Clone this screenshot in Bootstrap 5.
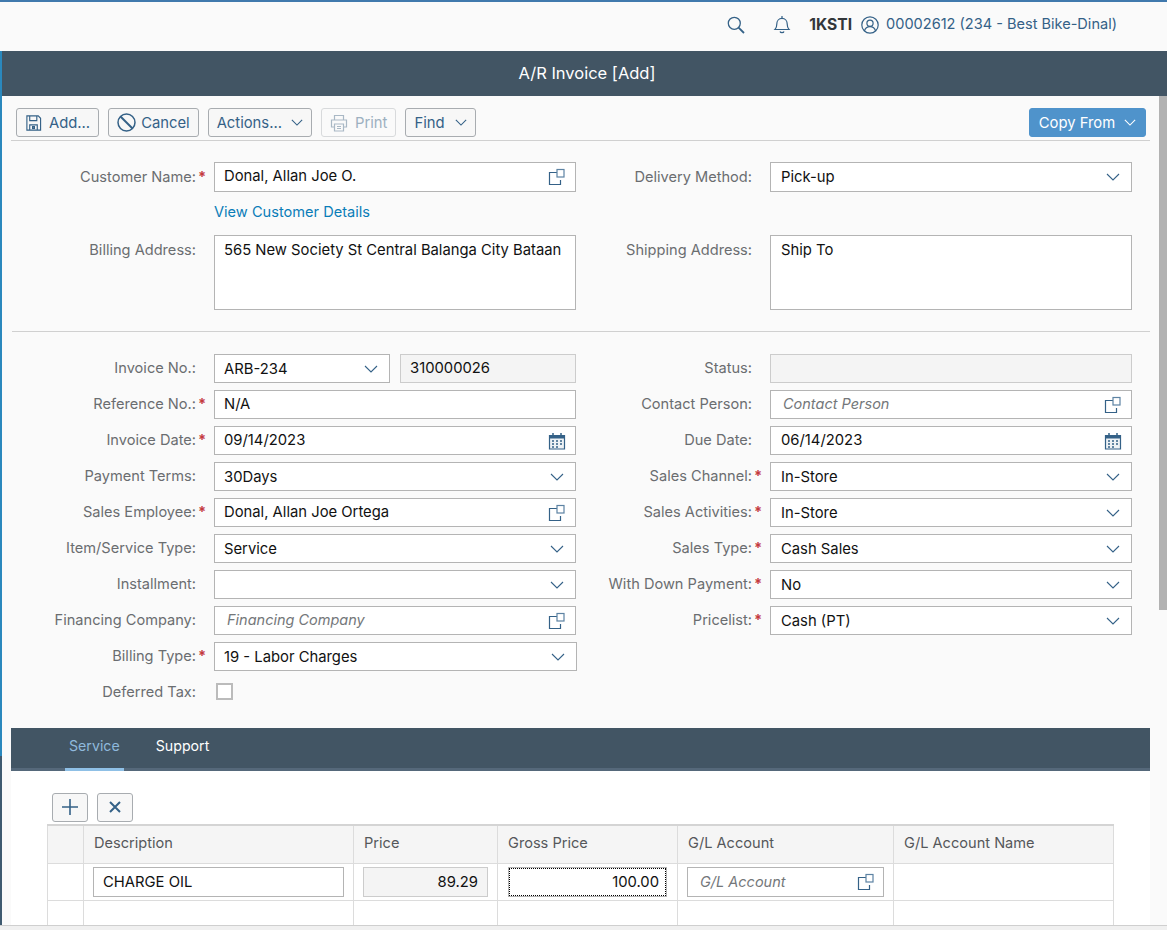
<!DOCTYPE html>
<html lang="en">
<head>
<meta charset="utf-8">
<title>A/R Invoice [Add]</title>
<link href="https://cdn.jsdelivr.net/npm/bootstrap@5.3.0/dist/css/bootstrap.min.css" rel="stylesheet">
<style>
:root{--ink:#346187;--fld:#b4b4b4;}
html,body{height:930px;overflow:hidden;}
body{font-family:"Inter","Noto Sans",sans-serif;font-size:14.6px;background:#fafafa;color:#111;}
.page-wrap{height:930px;display:flex;flex-direction:column;position:relative;}
.top-strip{height:51px;border-top:2px solid #4079ad;background:#fafafa;color:var(--ink);flex:none;padding:0 50px 4px 0;font-size:14.55px;}
.top-strip .co{font-weight:700;color:#32363a;font-size:15.600px;}
.shell{flex:1;min-height:0;overflow:hidden;padding-left:2px;background:linear-gradient(#2a88bd 0,#2a88bd 705px,#3f5a70 705px);}
.shell-in{height:100%;background:#fafafa;}
.title-bar{height:45px;background:#425564;color:#fff;font-size:16.5px;padding:0 0 1px 5px;}
.tool-row{margin:0 17px 0 9px;padding:12px 0 3px 5px;border-bottom:1px solid #d0d0d0;height:45px;}
.tbtn.btn{--bs-btn-padding-y:0;--bs-btn-padding-x:8px;--bs-btn-font-size:14.8px;--bs-btn-color:var(--ink);--bs-btn-bg:#f7f7f7;--bs-btn-border-color:#a8acb0;--bs-btn-border-radius:3px;--bs-btn-hover-color:var(--ink);--bs-btn-hover-bg:#eee;--bs-btn-hover-border-color:#a8acb0;height:29px;line-height:27px;padding-top:1px;display:inline-flex;align-items:center;gap:5px;white-space:nowrap;}
.tbtn.btn svg{margin-top:-1px;}
.tbtn.dim{color:#9db0c0;border-color:#d8dadc;}
.tbtn.prime.btn{--bs-btn-color:#fff;--bs-btn-bg:#4f93cb;--bs-btn-border-color:#4f93cb;--bs-btn-hover-color:#fff;--bs-btn-hover-bg:#4f93cb;--bs-btn-hover-border-color:#4f93cb;min-width:117px;justify-content:center;}
.icon-btn.btn{width:36px;justify-content:center;padding:0;}
.form-zone{padding:21px 0 14px 10px;}
.fld-row{display:flex;height:29px;margin-bottom:7px;}
.fld-row.tall{height:75px;margin-bottom:21px;align-items:flex-start;}
.fld-row.first{height:30px;margin-bottom:0;}
.fld-row.first .lbl-l,.fld-row.first .lbl-r,.fld-row.first .star,.fld-row.tall .lbl-l,.fld-row.tall .lbl-r{line-height:30px;}
.fld-row.lnk{height:43px;margin:0;align-items:center;}
.lbl-l,.lbl-r{color:#6a6d70;text-align:right;line-height:28px;white-space:nowrap;flex:none;}
.lbl-l{width:184px;margin-right:2px;}
.lbl-r{width:176px;}
.star{flex:none;color:#c4393f;line-height:28px;font-weight:700;}
.star-l{width:16px;}
.star-r{width:18px;padding-left:2px;}
.fld{width:362px;flex:none;position:relative;}
.fld .form-control,.fld .form-select{height:100%;border:1px solid var(--fld);border-radius:0;font-size:14.8px;padding:0 9px 2px;color:#111;box-shadow:none;}
.fld .form-select{padding:1px 9px 0;}
.lbl-r ~ .fld .form-control,.lbl-r ~ .fld .form-select{padding-left:10px;}
.fld textarea.form-control{height:75px;padding:3px 9px;resize:none;}
.form-select{background-image:url("data:image/svg+xml,%3Csvg xmlns='http://www.w3.org/2000/svg' viewBox='0 0 14 8'%3E%3Cpath d='M1 1l6 6 6-6' fill='none' stroke='%23346187' stroke-width='1.1'/%3E%3C/svg%3E");background-size:14px 8px;background-position:right 11px center;}
.form-control:disabled{background:#f4f4f4;border-color:#ccc;}
.form-control::placeholder{color:#74777a;font-style:italic;opacity:1;font-size:14.500px;}
.ph-in{padding-left:12px!important;}
.fld-ico{position:absolute;right:10px;top:50%;transform:translateY(-50%);width:18px;height:18px;display:block;}
.view-link{color:#0a7db8;text-decoration:none;margin-left:202px;padding-bottom:2px;}
.sep-line{border-top:1px solid #d0d0d0;margin:0 17px 22px 0;}
.split{display:flex;gap:10px;}
.split .form-select,.split .form-control{width:176px;flex:none;}
.wide-fld{width:363px;}
.tick.form-check-input{width:17px;height:17px;border:2px solid #bbb;border-radius:0;margin:5px 0 0 2px;background-color:#fff;}
.tab-strip{margin:0 17px 0 9px;height:43px;background:#425564;border-bottom:3px solid #55687a;padding-left:54px;position:relative;font-size:14.200px;}
.tab-strip .nav-link{color:#fff;padding:0 4px;height:43px;line-height:35px;margin-right:28px;border-bottom:3px solid transparent;}
.tab-strip .nav-link.active{color:#8fb9dc;border-bottom-color:#8fc0e6;}
.lower{background:#fff;margin:0 17px 0 9px;padding:22px 36px 0 36px;height:200px;overflow:hidden;}
.mini-row{display:flex;gap:9px;padding-left:5px;height:31px;}
.inv-table{table-layout:fixed;width:1066px;margin:0;border-color:#dcdcdc;font-size:14.6px;border-top:2px solid #d4d4d4;}
.inv-table th{background:#f5f5f5;color:#55585b;font-weight:400;height:38px;padding:0 10px;vertical-align:middle;}
.inv-table td{height:37px;padding:3px 9px;vertical-align:middle;background:#fff;position:relative;}
.inv-table td.gross-cell{padding:3px 10px;}
.inv-table .cin{height:30px;border:1px solid var(--fld);border-radius:0;font-size:14.8px;padding:0 9px;color:#111;}
.inv-table .cin:disabled{background:#f4f4f4;border-color:#ccc;}
.inv-table .focus-cin{outline:1px dotted #000;outline-offset:-2px;padding-right:7px;}
.inv-table tr.blank td{height:26px;}
.scroll-thumb{position:absolute;right:0;top:96px;width:8px;height:514px;background:#b2b2b2;}
.foot-line{flex:none;height:5px;background:#f0f0f0;border-top:1px solid #cfcfcf;}
</style>
</head>
<body>
<div class="page-wrap">
  <header class="top-strip d-flex align-items-center justify-content-end">
    <svg style="margin-right:28px" width="18" height="18" viewBox="0 0 18 18" fill="none" stroke="#346187" stroke-width="1.3"><circle cx="7.300" cy="7.300" r="6"/><path d="M11.600 11.600l5.400 5.400" stroke-width="1.800"/></svg>
    <svg width="18" height="19" viewBox="0 0 18 19" fill="none" stroke="#346187" stroke-width="1.2" style="margin-right:18px"><path d="M2 14.500c1.400-1.400 1.800-2.700 1.800-5.500 0-3 2-5.600 5.200-5.600s5.200 2.600 5.200 5.600c0 2.800.4 4.100 1.800 5.500z"/><path d="M9 1v2.200M7 16.500c.5 1.600 3.500 1.600 4 0"/></svg>
    <span class="co">1KSTI</span>
    <svg width="18" height="18" viewBox="0 0 18 18" fill="none" stroke="#346187" stroke-width="1.2" style="margin:0 7px 0 9px"><circle cx="9" cy="9" r="8.200"/><circle cx="9" cy="7.200" r="3.100"/><path d="M3.400 15c.8-3 2.800-4.400 5.600-4.400s4.800 1.400 5.600 4.400"/></svg>
    <span>00002612 (234 - Best Bike-Dinal)</span>
  </header>
  <div class="shell">
    <div class="shell-in">
      <div class="title-bar d-flex align-items-center justify-content-center">A/R Invoice [Add]</div>
      <div class="tool-row d-flex">
        <button class="btn tbtn" type="button" style="margin-right:9px;gap:7px"><svg width="17" height="18" viewBox="0 0 18 18" fill="none" stroke="#346187" stroke-width="1.2"><path d="M2 1.500h12l2.500 2.500v12.500H2z"/><path d="M5 1.500v5h7.500v-5M5 16.500v-5.500h8v5.500"/><rect x="8" y="12.800" width="2" height="2"/></svg>Add...</button>
        <button class="btn tbtn" type="button" style="margin-right:9px"><svg width="19" height="19" viewBox="0 0 19 19" fill="none" stroke="#346187" stroke-width="1.500"><circle cx="9.500" cy="9.500" r="8.500"/><path d="M3.500 3.500l12 12" stroke-width="2"/></svg>Cancel</button>
        <button class="btn tbtn" type="button" style="margin-right:9px;gap:9px">Actions...<svg width="12" height="7" viewBox="0 0 14 8" fill="none" stroke="#346187" stroke-width="1.300"><path d="M1 1l6 6 6-6"/></svg></button>
        <button class="btn tbtn dim" type="button" disabled style="margin-right:9px;opacity:1;gap:7px"><svg width="18" height="18" viewBox="0 0 18 18" fill="none" stroke="#a9b8c5" stroke-width="1.200"><path d="M4.500 6V1.500h9V6M4.500 13H1.500V6h15v7h-3"/><path d="M4.500 10h9v7h-9zM7 12.500h4M7 14.500h4"/></svg>Print</button>
        <button class="btn tbtn" type="button" style="gap:10px">Find<svg width="12" height="7" viewBox="0 0 14 8" fill="none" stroke="#346187" stroke-width="1.300"><path d="M1 1l6 6 6-6"/></svg></button>
        <button class="btn tbtn prime ms-auto" type="button" style="margin-right:4px;gap:9px">Copy From<svg width="12" height="7" viewBox="0 0 14 8" fill="none" stroke="#fff" stroke-width="1.300"><path d="M1 1l6 6 6-6"/></svg></button>
      </div>
      <div class="form-zone">
        <div class="fld-row first">
          <div class="lbl-l">Customer Name:</div><div class="star star-l">*</div>
          <div class="fld"><input class="form-control" value="Donal, Allan Joe O."><svg class="fld-ico" viewBox="0 0 18 18" fill="none" stroke="#346187" stroke-width="1.200"><path d="M9 4.500H1.500V16.500H12.500V12"/><rect x="9" y="1.500" width="7" height="7.500" stroke="#5d83a3"/></svg></div>
          <div class="lbl-r">Delivery Method:</div><div class="star star-r"></div>
          <div class="fld"><select class="form-select"><option>Pick-up</option></select></div>
        </div>
        <div class="fld-row lnk"><a class="view-link" href="#">View Customer Details</a></div>
        <div class="fld-row tall">
          <div class="lbl-l">Billing Address:</div><div class="star star-l"></div>
          <div class="fld"><textarea class="form-control">565 New Society St Central Balanga City Bataan</textarea></div>
          <div class="lbl-r">Shipping Address:</div><div class="star star-r"></div>
          <div class="fld"><textarea class="form-control">Ship To</textarea></div>
        </div>
        <div class="sep-line"></div>
        <div class="fld-row">
          <div class="lbl-l">Invoice No.:</div><div class="star star-l"></div>
          <div class="fld split"><select class="form-select"><option>ARB-234</option></select><input class="form-control" value="310000026" disabled></div>
          <div class="lbl-r">Status:</div><div class="star star-r"></div>
          <div class="fld"><input class="form-control" disabled></div>
        </div>
        <div class="fld-row">
          <div class="lbl-l">Reference No.:</div><div class="star star-l">*</div>
          <div class="fld"><input class="form-control" value="N/A"></div>
          <div class="lbl-r">Contact Person:</div><div class="star star-r"></div>
          <div class="fld"><input class="form-control ph-in" placeholder="Contact Person"><svg class="fld-ico" viewBox="0 0 18 18" fill="none" stroke="#346187" stroke-width="1.200"><path d="M9 4.500H1.500V16.500H12.500V12"/><rect x="9" y="1.500" width="7" height="7.500" stroke="#5d83a3"/></svg></div>
        </div>
        <div class="fld-row">
          <div class="lbl-l">Invoice Date:</div><div class="star star-l">*</div>
          <div class="fld"><input class="form-control" value="09/14/2023"><svg class="fld-ico" viewBox="0 0 18 18"><path d="M1.500 3.500h15v13.500h-15z" fill="#eef2f5" stroke="#346187" stroke-width="1.200"/><path d="M1.500 3h15v3.500h-15z" fill="#346187"/><path d="M5 1v3M13 1v3" stroke="#346187" stroke-width="1.500"/><path d="M4 9h2M8 9h2M12 9h2M4 12h2M8 12h2M12 12h2M4 15h2M8 15h2" stroke="#346187" stroke-width="1.500"/></svg></div>
          <div class="lbl-r">Due Date:</div><div class="star star-r"></div>
          <div class="fld"><input class="form-control" value="06/14/2023"><svg class="fld-ico" viewBox="0 0 18 18"><path d="M1.500 3.500h15v13.500h-15z" fill="#eef2f5" stroke="#346187" stroke-width="1.200"/><path d="M1.500 3h15v3.500h-15z" fill="#346187"/><path d="M5 1v3M13 1v3" stroke="#346187" stroke-width="1.500"/><path d="M4 9h2M8 9h2M12 9h2M4 12h2M8 12h2M12 12h2M4 15h2M8 15h2" stroke="#346187" stroke-width="1.500"/></svg></div>
        </div>
        <div class="fld-row">
          <div class="lbl-l">Payment Terms:</div><div class="star star-l"></div>
          <div class="fld"><select class="form-select"><option>30Days</option></select></div>
          <div class="lbl-r">Sales Channel:</div><div class="star star-r">*</div>
          <div class="fld"><select class="form-select"><option>In-Store</option></select></div>
        </div>
        <div class="fld-row">
          <div class="lbl-l">Sales Employee:</div><div class="star star-l">*</div>
          <div class="fld"><input class="form-control" value="Donal, Allan Joe Ortega"><svg class="fld-ico" viewBox="0 0 18 18" fill="none" stroke="#346187" stroke-width="1.200"><path d="M9 4.500H1.500V16.500H12.500V12"/><rect x="9" y="1.500" width="7" height="7.500" stroke="#5d83a3"/></svg></div>
          <div class="lbl-r">Sales Activities:</div><div class="star star-r">*</div>
          <div class="fld"><select class="form-select"><option>In-Store</option></select></div>
        </div>
        <div class="fld-row">
          <div class="lbl-l">Item/Service Type:</div><div class="star star-l"></div>
          <div class="fld"><select class="form-select"><option>Service</option></select></div>
          <div class="lbl-r">Sales Type:</div><div class="star star-r">*</div>
          <div class="fld"><select class="form-select"><option>Cash Sales</option></select></div>
        </div>
        <div class="fld-row">
          <div class="lbl-l">Installment:</div><div class="star star-l"></div>
          <div class="fld"><select class="form-select"><option></option></select></div>
          <div class="lbl-r">With Down Payment:</div><div class="star star-r">*</div>
          <div class="fld"><select class="form-select"><option>No</option></select></div>
        </div>
        <div class="fld-row">
          <div class="lbl-l">Financing Company:</div><div class="star star-l"></div>
          <div class="fld"><input class="form-control ph-in" placeholder="Financing Company"><svg class="fld-ico" viewBox="0 0 18 18" fill="none" stroke="#346187" stroke-width="1.200"><path d="M9 4.500H1.500V16.500H12.500V12"/><rect x="9" y="1.500" width="7" height="7.500" stroke="#5d83a3"/></svg></div>
          <div class="lbl-r">Pricelist:</div><div class="star star-r">*</div>
          <div class="fld"><select class="form-select"><option>Cash (PT)</option></select></div>
        </div>
        <div class="fld-row">
          <div class="lbl-l">Billing Type:</div><div class="star star-l">*</div>
          <div class="fld wide-fld"><select class="form-select"><option>19 - Labor Charges</option></select></div>
        </div>
        <div class="fld-row">
          <div class="lbl-l">Deferred Tax:</div><div class="star star-l"></div>
          <div class="fld"><input class="form-check-input tick" type="checkbox"></div>
        </div>
      </div>
      <ul class="nav tab-strip">
        <li class="nav-item"><a class="nav-link active" href="#">Service</a></li>
        <li class="nav-item"><a class="nav-link" href="#">Support</a></li>
      </ul>
      <div class="lower">
        <div class="mini-row">
          <button class="btn tbtn icon-btn" type="button"><svg width="16" height="16" viewBox="0 0 16 16" stroke="#346187" stroke-width="1.600"><path d="M8 0v16M0 8h16"/></svg></button>
          <button class="btn tbtn icon-btn" type="button"><svg width="12" height="12" viewBox="0 0 12 12" stroke="#346187" stroke-width="2"><path d="M1 1l10 10M11 1L1 11"/></svg></button>
        </div>
        <table class="table table-bordered inv-table">
          <colgroup><col style="width:36px"><col style="width:270px"><col style="width:144px"><col style="width:180px"><col style="width:216px"><col style="width:220px"></colgroup>
          <thead><tr><th></th><th>Description</th><th>Price</th><th>Gross Price</th><th>G/L Account</th><th>G/L Account Name</th></tr></thead>
          <tbody>
            <tr>
              <td></td>
              <td><input class="form-control cin" value="CHARGE OIL"></td>
              <td><input class="form-control cin text-end" value="89.29" disabled></td>
              <td class="gross-cell"><input class="form-control cin focus-cin text-end" value="100.00"></td>
              <td><input class="form-control cin ph-in" placeholder="G/L Account"><svg class="fld-ico" style="right:18px" viewBox="0 0 18 18" fill="none" stroke="#346187" stroke-width="1.200"><path d="M9 4.500H1.500V16.500H12.500V12"/><rect x="9" y="1.500" width="7" height="7.500" stroke="#5d83a3"/></svg></td>
              <td></td>
            </tr>
            <tr class="blank"><td></td><td></td><td></td><td></td><td></td><td></td></tr>
          </tbody>
        </table>
      </div>
    </div>
  </div>
  <div class="foot-line"></div>
  <div class="scroll-thumb"></div>
</div>
<script src="https://cdn.jsdelivr.net/npm/bootstrap@5.3.0/dist/js/bootstrap.bundle.min.js"></script>
</body>
</html>
